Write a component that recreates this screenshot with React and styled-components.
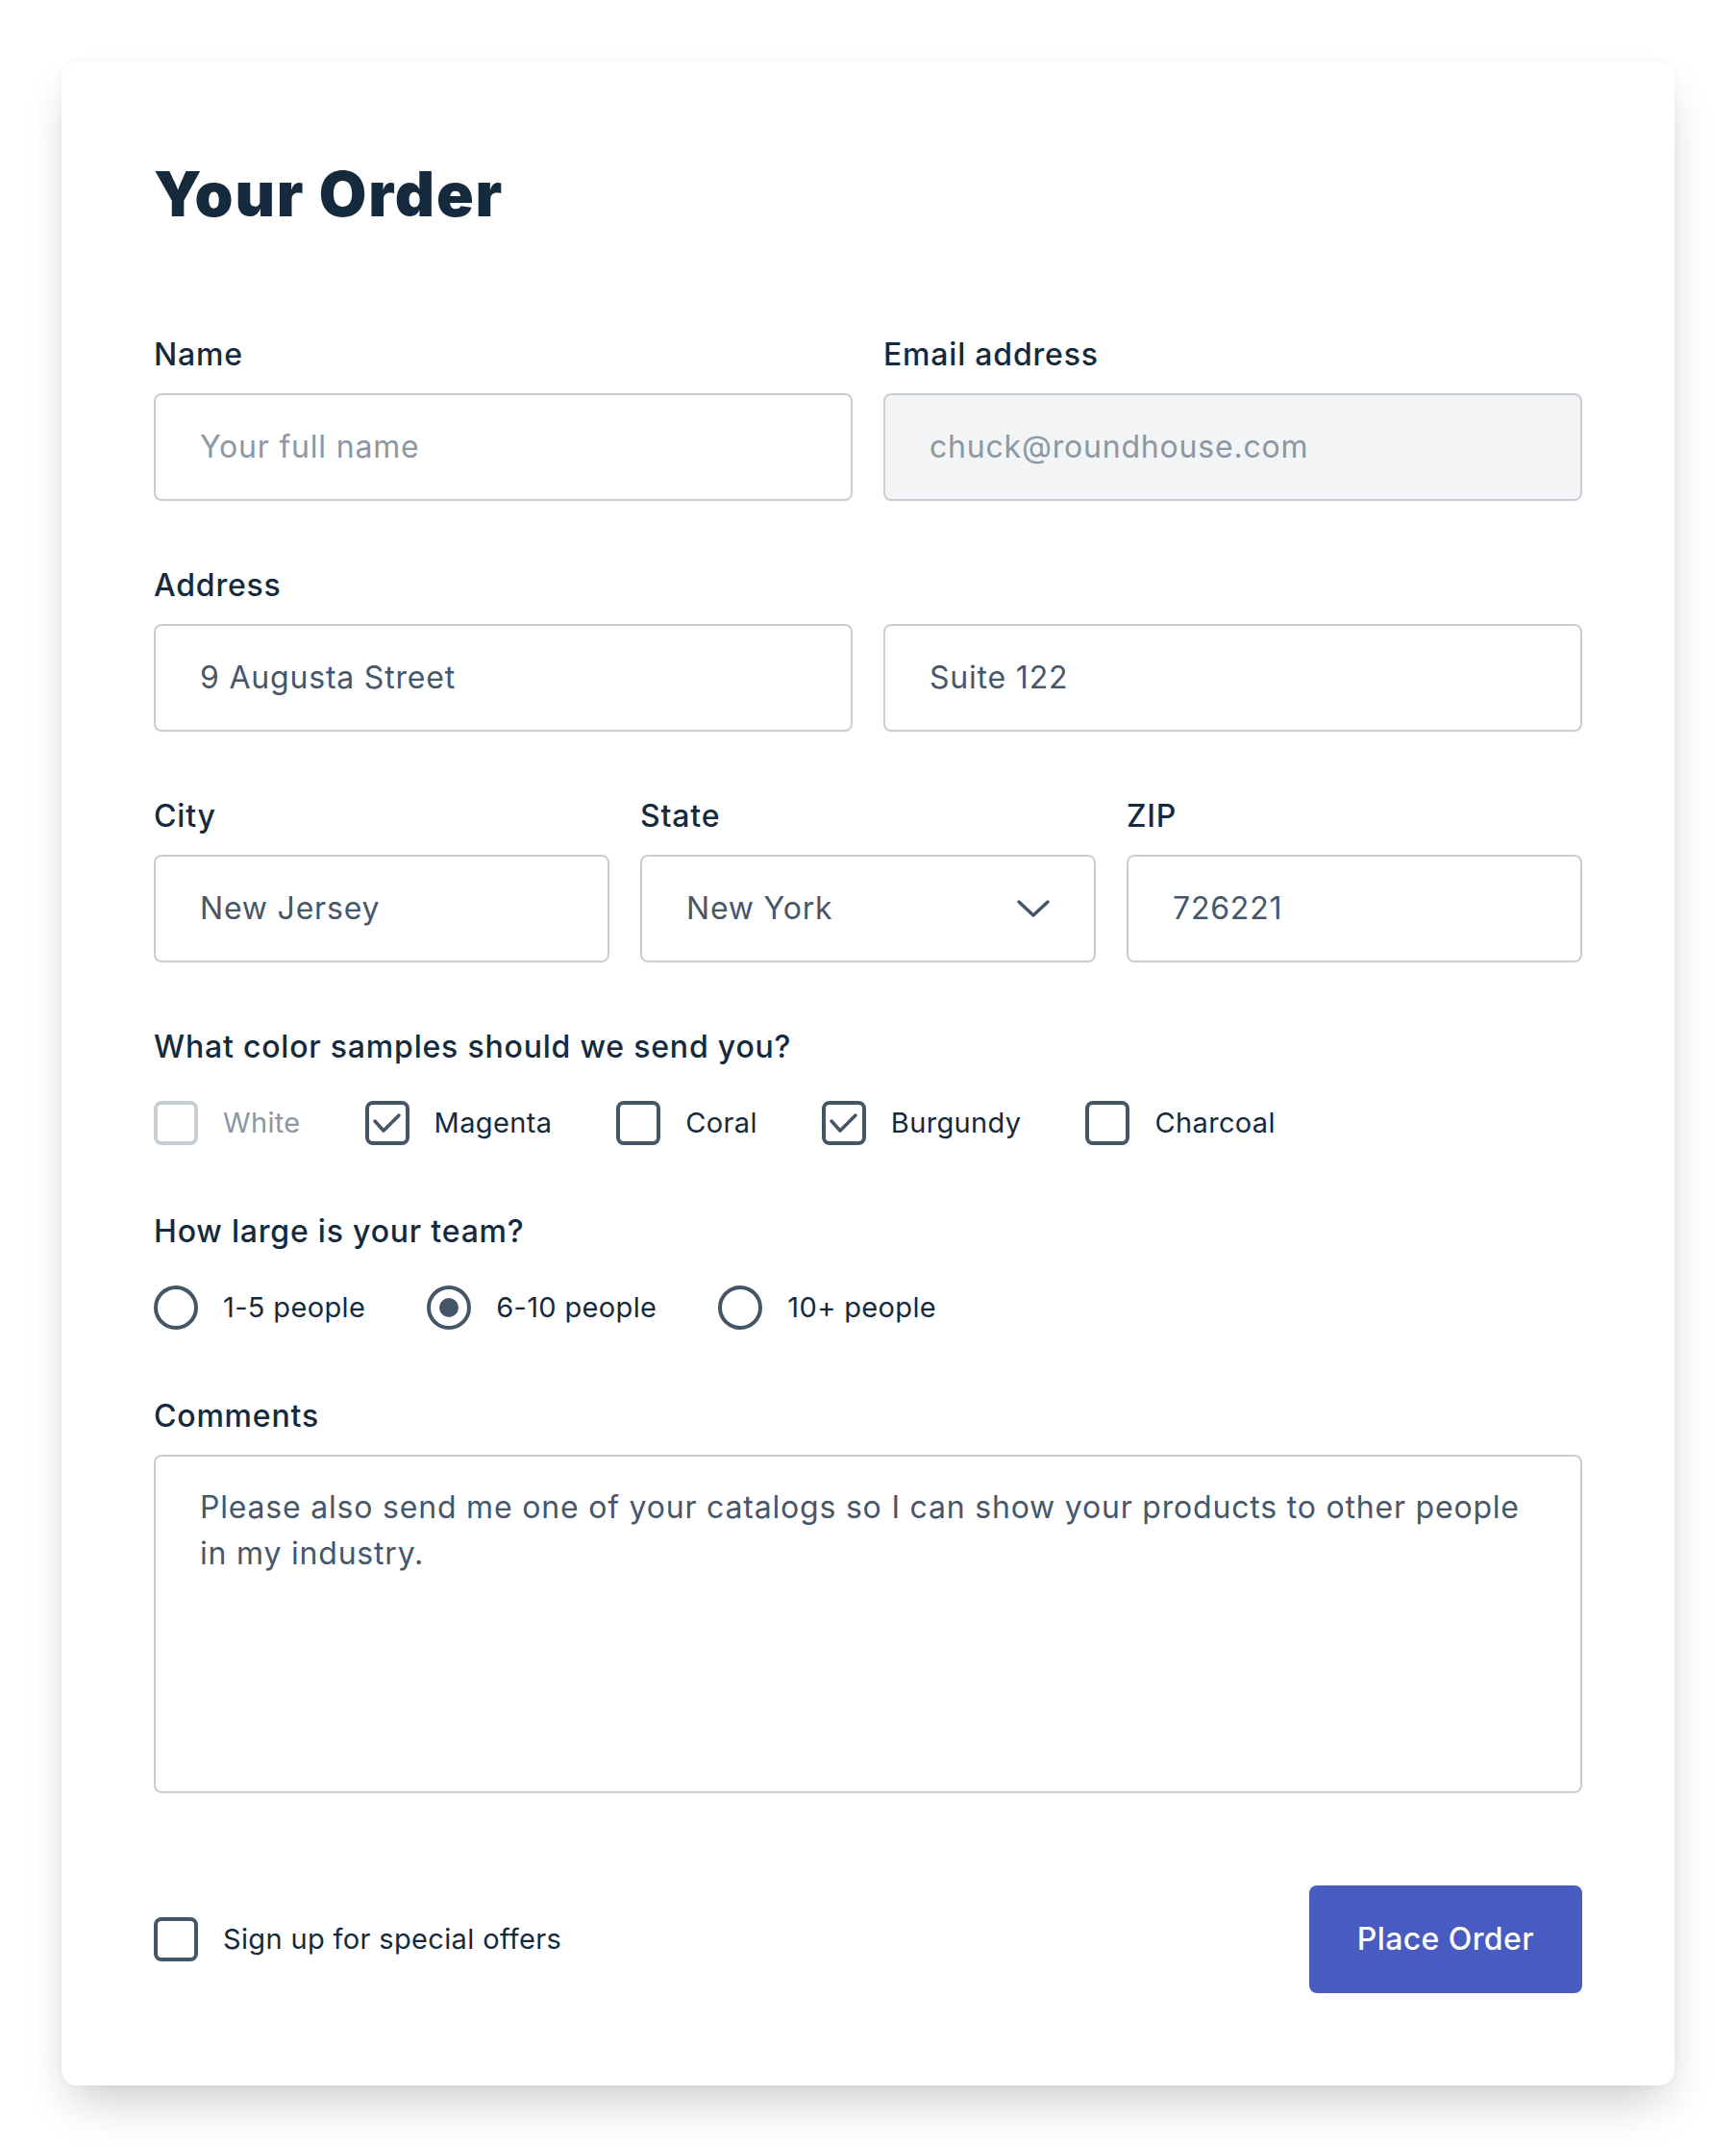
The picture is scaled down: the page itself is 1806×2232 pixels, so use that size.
import React from "react";
import styled, { createGlobalStyle } from "styled-components";

const GlobalStyle = createGlobalStyle`
  *, *::before, *::after { box-sizing: border-box; }
  html, body { margin: 0; padding: 0; background: #ffffff; }
  body {
    font-family: Inter, "Noto Sans", sans-serif;
    color: #152a3c;
    -webkit-font-smoothing: antialiased;
  }
`;

const Page = styled.div`
  padding: 64px;
`;

const Card = styled.main`
  background: #ffffff;
  border-radius: 16px;
  padding: 96px;
  box-shadow: 0 0 10px rgba(0, 0, 0, 0.04), 0 25px 50px -12px rgba(0, 0, 0, 0.22);
`;

const Title = styled.h1`
  margin: 4px 0 104px;
  font-size: 64px;
  line-height: 1.2;
  font-weight: 900;
  letter-spacing: 1.8px;
  color: #152a3c;
`;

const Form = styled.form`
  display: flex;
  flex-direction: column;
  gap: 64px;
  margin: 0;
`;

const Grid = styled.div`
  display: grid;
  grid-template-columns: repeat(${(p) => p.$cols}, minmax(0, 1fr));
  gap: 32px;
`;

const Field = styled.div`
  display: flex;
  flex-direction: column;
  min-width: 0;
`;

const Label = styled.label`
  display: block;
  font-size: 32px;
  line-height: 48px;
  font-weight: 500;
  letter-spacing: 0.8px;
  color: #152a3c;
  margin-bottom: ${(p) => (p.$loose ? "30px" : "16px")};
`;

const fieldBase = `
  width: 100%;
  border: 2px solid #c9ced4;
  border-radius: 8px;
  background: #ffffff;
  font-family: Inter, "Noto Sans", sans-serif;
  font-size: 32px;
  line-height: 48px;
  letter-spacing: 0.8px;
  color: #475669;
  outline: none;
`;

const TextInput = styled.input`
  ${fieldBase}
  height: 112px;
  padding: 0 46px;
  display: block;

  &::placeholder {
    color: #8b97a3;
    opacity: 1;
  }

  &:disabled {
    background: #f3f4f6;
    color: #8b97a3;
    -webkit-text-fill-color: #8b97a3;
    opacity: 1;
  }
`;

const SelectBox = styled.div`
  ${fieldBase}
  height: 112px;
  padding: 0 45px 0 46px;
  display: flex;
  align-items: center;
  justify-content: space-between;
`;

const TextArea = styled.textarea`
  ${fieldBase}
  display: block;
  height: 352px;
  padding: 29px 46px;
  resize: none;
`;

const Options = styled.div`
  display: flex;
  align-items: center;
  gap: ${(p) => p.$gap}px;
  height: 50px;
`;

const Option = styled.label`
  display: flex;
  align-items: center;
  gap: 26px;
  font-size: 29px;
  line-height: 48px;
  font-weight: 400;
  letter-spacing: 0.35px;
  color: ${(p) => (p.$disabled ? "#8b97a3" : "#152a3c")};
`;

const Box = styled.span`
  width: 46px;
  height: 46px;
  flex: none;
  border: 4px solid ${(p) => (p.$disabled ? "#c9ced4" : "#455568")};
  border-radius: 8px;
  display: flex;
  align-items: center;
  justify-content: center;
`;

const Radio = styled.span`
  width: 46px;
  height: 46px;
  flex: none;
  border: 4px solid #455568;
  border-radius: 50%;
  display: flex;
  align-items: center;
  justify-content: center;

  &::after {
    content: "";
    width: 20px;
    height: 20px;
    border-radius: 50%;
    background: ${(p) => (p.$checked ? "#455568" : "transparent")};
  }
`;

const Footer = styled.div`
  display: flex;
  align-items: center;
  justify-content: space-between;
  margin-top: 32px;
`;

const Button = styled.button`
  height: 112px;
  min-width: 284px;
  padding: 0 50px;
  border: none;
  border-radius: 8px;
  background: #485bc0;
  color: #ffffff;
  font-family: Inter, "Noto Sans", sans-serif;
  font-size: 32px;
  font-weight: 500;
  letter-spacing: 0.4px;
  cursor: pointer;
`;

const Check = () => (
  <svg width="38" height="38" viewBox="0 0 38 38" fill="none">
    <polyline
      points="6,17 15,27 31,11"
      stroke="#455568"
      strokeWidth="3.5"
      strokeLinecap="round"
      strokeLinejoin="round"
    />
  </svg>
);

const Chevron = () => (
  <svg width="36" height="20" viewBox="0 0 36 20" fill="none">
    <polyline
      points="3,3 18,17 33,3"
      stroke="#455568"
      strokeWidth="3.5"
      strokeLinecap="round"
      strokeLinejoin="round"
    />
  </svg>
);

const colors = [
  { name: "White", checked: false, disabled: true },
  { name: "Magenta", checked: true },
  { name: "Coral", checked: false },
  { name: "Burgundy", checked: true },
  { name: "Charcoal", checked: false },
];

const teams = [
  { name: "1-5 people", checked: false },
  { name: "6-10 people", checked: true },
  { name: "10+ people", checked: false },
];

export default function App() {
  return (
    <>
      <GlobalStyle />
      <Page>
        <Card>
          <Title>Your Order</Title>
          <Form onSubmit={(e) => e.preventDefault()}>
            <Grid $cols={2}>
              <Field>
                <Label htmlFor="name">Name</Label>
                <TextInput id="name" placeholder="Your full name" />
              </Field>
              <Field>
                <Label htmlFor="email">Email address</Label>
                <TextInput id="email" disabled defaultValue="chuck@roundhouse.com" />
              </Field>
            </Grid>

            <Field>
              <Label htmlFor="address">Address</Label>
              <Grid $cols={2}>
                <TextInput id="address" defaultValue="9 Augusta Street" />
                <TextInput defaultValue="Suite 122" />
              </Grid>
            </Field>

            <Grid $cols={3}>
              <Field>
                <Label htmlFor="city">City</Label>
                <TextInput id="city" defaultValue="New Jersey" />
              </Field>
              <Field>
                <Label>State</Label>
                <SelectBox>
                  <span>New York</span>
                  <Chevron />
                </SelectBox>
              </Field>
              <Field>
                <Label htmlFor="zip">ZIP</Label>
                <TextInput id="zip" defaultValue="726221" />
              </Field>
            </Grid>

            <Field>
              <Label $loose>What color samples should we send you?</Label>
              <Options $gap={67}>
                {colors.map((c) => (
                  <Option key={c.name} $disabled={c.disabled}>
                    <Box $disabled={c.disabled}>{c.checked && <Check />}</Box>
                    {c.name}
                  </Option>
                ))}
              </Options>
            </Field>

            <Field>
              <Label $loose>How large is your team?</Label>
              <Options $gap={64}>
                {teams.map((t) => (
                  <Option key={t.name}>
                    <Radio $checked={t.checked} />
                    {t.name}
                  </Option>
                ))}
              </Options>
            </Field>

            <Field>
              <Label htmlFor="comments">Comments</Label>
              <TextArea
                id="comments"
                defaultValue="Please also send me one of your catalogs so I can show your products to other people in my industry."
              />
            </Field>

            <Footer>
              <Option>
                <Box />
                Sign up for special offers
              </Option>
              <Button type="submit">Place Order</Button>
            </Footer>
          </Form>
        </Card>
      </Page>
    </>
  );
}
